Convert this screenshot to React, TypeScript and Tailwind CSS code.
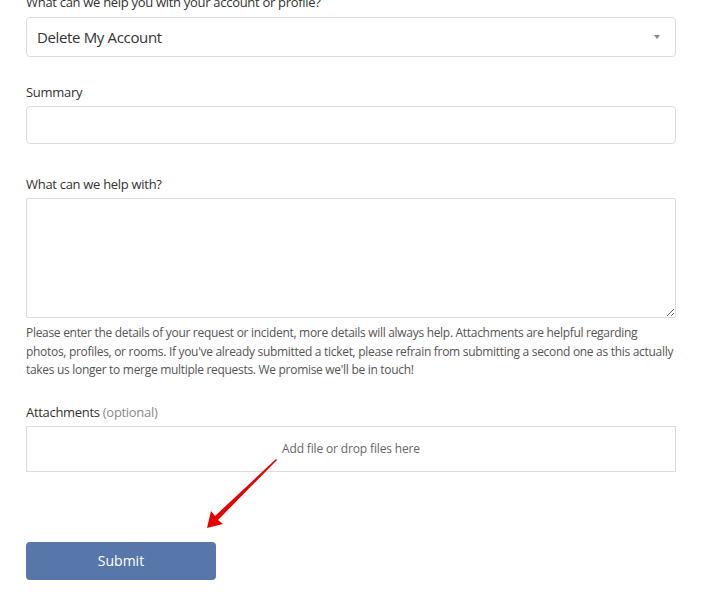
import React from 'react';

const font = { fontFamily: '"Open Sans", "Noto Sans", Arial, sans-serif' };

function Label({ children, className = '' }: { children: React.ReactNode; className?: string }) {
  return <div className={`text-[13px] leading-[18px] tracking-[-0.3px] text-[#333] ${className}`}>{children}</div>;
}

export default function App() {
  return (
    <div className="min-h-screen bg-white overflow-hidden" style={font}>
      <div className="relative pl-[26px] w-[676px]">
        {/* Account topic */}
        <Label className="-mt-[7px] mb-[6px]">What can we help you with your account or profile?</Label>
        <div className="h-[40px] flex items-center justify-between border border-[#dcdcdc] rounded-[4px] pl-[10px] pr-[15px]">
          <span className="text-[15px] tracking-[-0.35px] text-[#333]">Delete My Account</span>
          <span className="w-0 h-0 border-l-[3px] border-r-[3px] border-t-[4px] border-l-transparent border-r-transparent border-t-[#888]" />
        </div>

        {/* Summary */}
        <Label className="mt-[26px] mb-[5px]">Summary</Label>
        <input className="block w-full h-[38px] border border-[#dcdcdc] rounded-[4px] outline-none px-[10px]" />

        {/* Description */}
        <Label className="mt-[31px] mb-[5px]">What can we help with?</Label>
        <textarea className="block w-full h-[120px] border border-[#dcdcdc] rounded-[2px] outline-none p-[10px]" />
        <p className="mt-[6px] text-[12px] leading-[18.5px] text-[#555] tracking-[-0.3px]">
          <span className="block whitespace-nowrap">Please enter the details of your request or incident, more details will always help. Attachments are helpful regarding</span>
          <span className="block whitespace-nowrap">photos, profiles, or rooms. If you've already submitted a ticket, please refrain from submitting a second one as this actually</span>
          <span className="block whitespace-nowrap">takes us longer to merge multiple requests. We promise we'll be in touch!</span>
        </p>

        {/* Attachments */}
        <Label className="mt-[23px] mb-[5px]">
          Attachments <span className="text-[#888]">(optional)</span>
        </Label>
        <div className="h-[46px] flex items-center justify-center border border-[#dcdcdc] text-[12px] tracking-[-0.15px] text-[#666]">
          Add file or drop files here
        </div>

        <button className="mt-[70px] w-[190px] h-[38px] rounded-[4px] bg-[#5777ab] text-white text-[14px]">
          Submit
        </button>

        {/* annotation arrow */}
        <svg className="absolute left-0 top-0 pointer-events-none" width="709" height="616" viewBox="0 0 709 616">
          <polygon points="276,466 277,467 218,527 223,531 207,535 211,518 215,523" fill="#e60000" />
        </svg>
      </div>
    </div>
  );
}
